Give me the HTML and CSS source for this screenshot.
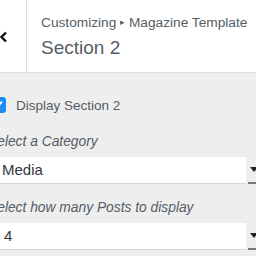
FILE: index.html
```html
<!DOCTYPE html>
<html lang="en">
<head>
    <meta charset="UTF-8">
    <title>Customizing - Section 2</title>
    <link rel="stylesheet" href="styles.css">
</head>
<body>
    <div class="header">
        <div class="back">
            <svg width="9" height="12" viewBox="0 0 9 12"><path d="M7 1.5 L2.5 6 L7 10.5" fill="none" stroke="#111" stroke-width="2.4"/></svg>
        </div>
        <div class="title">
            <div class="crumb">Customizing <span class="sep">&#9656;</span> Magazine Template</div>
            <div class="section">Section 2</div>
        </div>
    </div>

    <div class="panel">
        <label class="check">
            <span class="box">
                <svg width="12" height="12" viewBox="0 0 12 12"><path d="M2.5 6.5 L5 9 L10 2.5" fill="none" stroke="#fff" stroke-width="1.8"/></svg>
            </span>
            Display Section 2
        </label>

        <div class="field">
            <div class="label">Select a Category</div>
            <div class="select-row">
                <div class="select">Media</div>
                <div class="arrow"></div>
            </div>
        </div>

        <div class="field">
            <div class="label">Select how many Posts to display</div>
            <div class="select-row">
                <div class="select">4</div>
                <div class="arrow"></div>
            </div>
        </div>
    </div>
</body>
</html>
```

FILE: styles.css
```css
body {
    margin: 0;
    background-color: #eeeeee;
    font-family: 'Liberation Sans', Arial, sans-serif;
    color: #555d66;
    overflow: hidden;
}

.header {
    display: flex;
    height: 72px;
    background-color: #fff;
    border-bottom: 1px solid #dddddd;
}

.back {
    width: 26px;
    border-right: 1px solid #dddddd;
    display: flex;
    align-items: center;
    padding-top: 1px;
}

.back svg {
    margin-left: -1px;
}

.title {
    padding: 13px 0 0 14px;
}

.crumb {
    font-size: 13.7px;
    line-height: 18px;
    white-space: nowrap;
}

.crumb .sep {
    font-size: 9px;
    vertical-align: 2px;
}

.section {
    font-size: 19px;
    line-height: 26px;
    margin-top: 3px;
}

.panel {
    margin-left: -12px;
    padding-top: 24px;
}

.check {
    display: flex;
    align-items: center;
    gap: 10px;
    font-size: 13.5px;
    height: 16px;
    margin-left: 2px;
}

.box {
    width: 16px;
    height: 16px;
    border-radius: 3px;
    background-color: #1e8cf5;
    display: flex;
    align-items: center;
    justify-content: center;
}

.field {
    margin-top: 21px;
}

.field + .field {
    margin-top: 16px;
}

.label {
    font-style: italic;
    font-size: 13.8px;
    line-height: 16px;
    margin-bottom: 7px;
}

.select-row {
    display: flex;
    align-items: stretch;
}

.select {
    width: 248px;
    height: 26px;
    background-color: #fff;
    border-bottom: 1px solid #d6d6d6;
    font-size: 15px;
    line-height: 26px;
    padding-left: 14px;
    color: #32373c;
    box-sizing: content-box;
}

.field + .field .select {
    padding-left: 16px;
}

.arrow {
    position: relative;
    width: 8px;
    border-bottom: 2px solid #777;
    margin-left: 2px;
}

.arrow::after {
    content: '';
    position: absolute;
    left: 2px;
    top: 10px;
    border-left: 4px solid transparent;
    border-right: 4px solid transparent;
    border-top: 5px solid #222;
}
```
